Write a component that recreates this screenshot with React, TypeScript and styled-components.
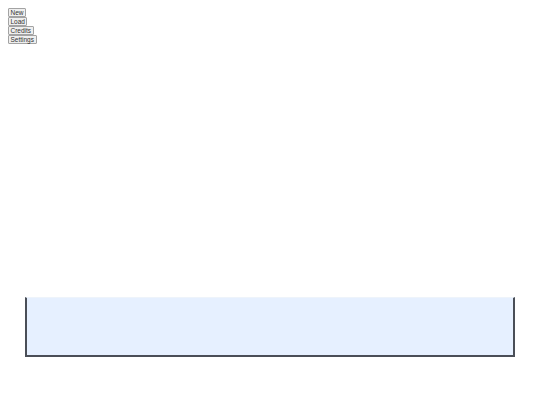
import React from 'react';
import styled, { createGlobalStyle } from 'styled-components';

const GlobalStyle = createGlobalStyle`
  html, body {
    margin: 0;
    padding: 0;
    background: #ffffff;
  }
  body {
    font-family: "Liberation Sans", Arial, sans-serif;
  }
`;

const Page = styled.div`
  display: flex;
  flex-direction: column;
  height: 405px;
  padding: 8px;
  box-sizing: border-box;
`;

const Menu = styled.div`
  display: flex;
  flex-direction: column;
  align-items: flex-start;
`;

const MenuButton = styled.button`
  font-family: "Liberation Sans", Arial, sans-serif;
  font-size: 6.5px;
  line-height: 7px;
  height: 9px;
  padding: 0 1.5px;
  margin: 0;
  color: #333;
  background: #efefef;
  border: 1px solid #a3a3a3;
  border-radius: 1px;
  box-sizing: border-box;
`;

const Panel = styled.div`
  margin: auto 17px 40px 17px;
  height: 60px;
  box-sizing: border-box;
  background: #e6f0ff;
  border: 2px solid #4a4e57;
  border-top: 1px solid #eef4fb;
`;

const App: React.FC = () => {
  return (
    <>
      <GlobalStyle />
      <Page>
        <Menu>
          <MenuButton>New</MenuButton>
          <MenuButton>Load</MenuButton>
          <MenuButton>Credits</MenuButton>
          <MenuButton>Settings</MenuButton>
        </Menu>
        <Panel />
      </Page>
    </>
  );
};

export default App;
